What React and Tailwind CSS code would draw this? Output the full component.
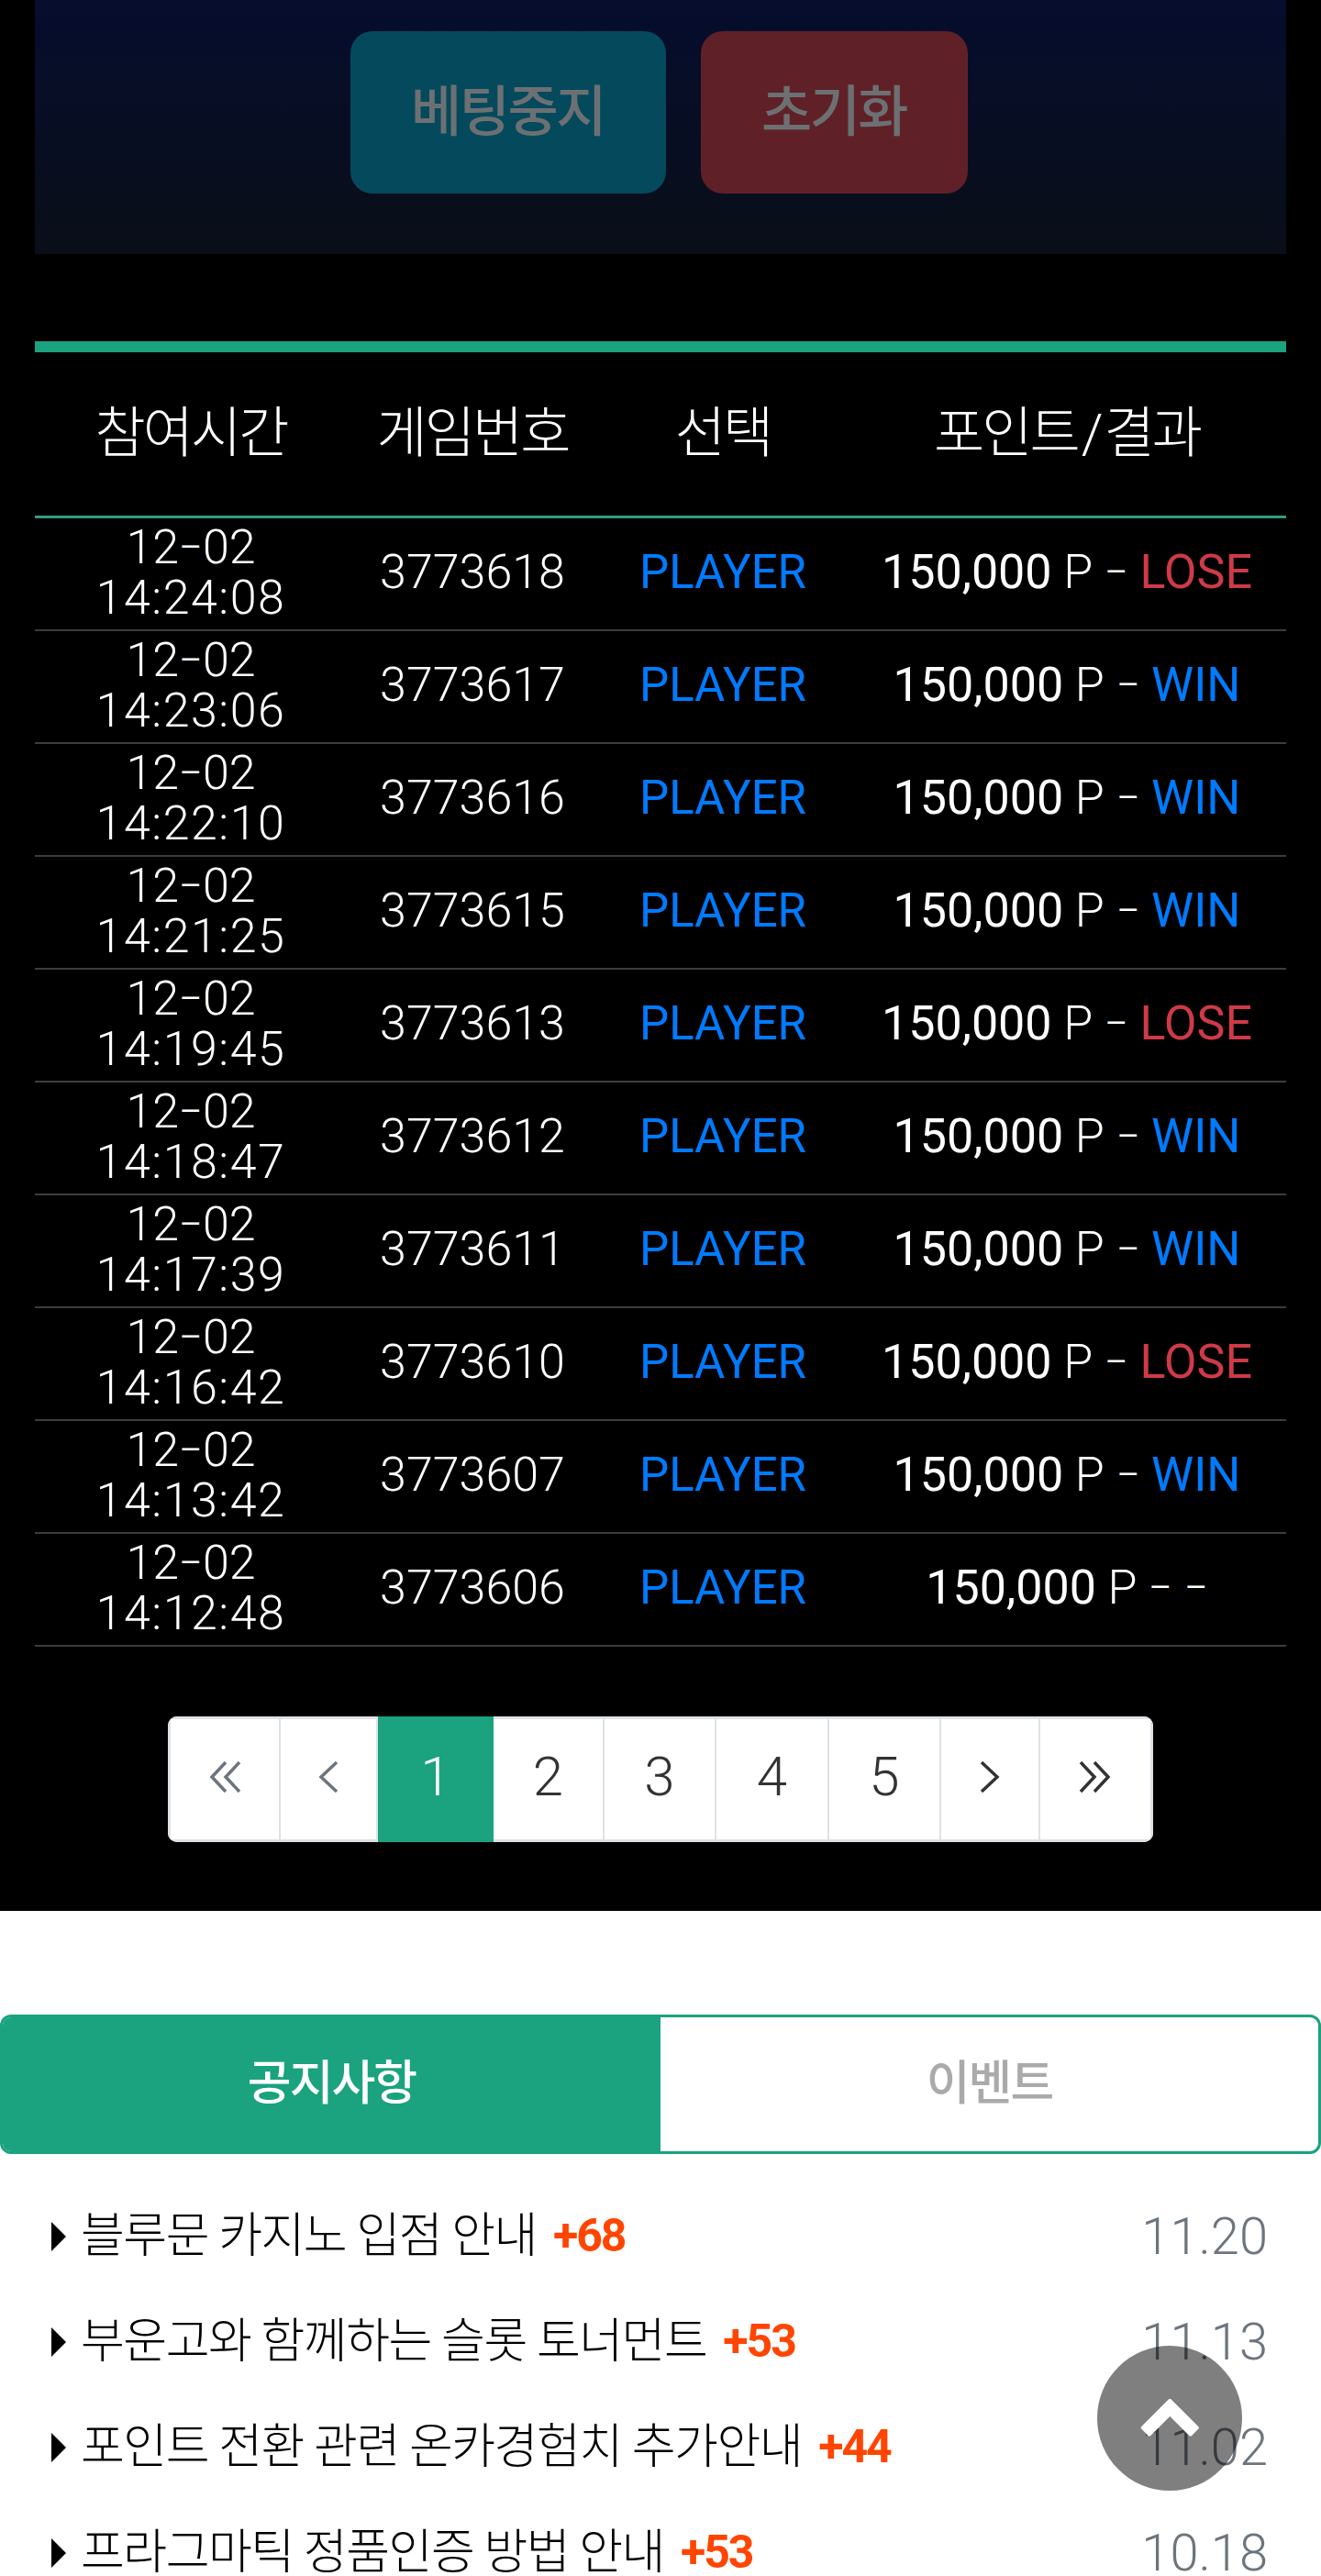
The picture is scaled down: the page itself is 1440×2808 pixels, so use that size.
const rows = [
  { date: '02', time: '14:24:08', no: '3773618', result: 'LOSE' },
  { date: '02', time: '14:23:06', no: '3773617', result: 'WIN' },
  { date: '02', time: '14:22:10', no: '3773616', result: 'WIN' },
  { date: '02', time: '14:21:25', no: '3773615', result: 'WIN' },
  { date: '02', time: '14:19:45', no: '3773613', result: 'LOSE' },
  { date: '02', time: '14:18:47', no: '3773612', result: 'WIN' },
  { date: '02', time: '14:17:39', no: '3773611', result: 'WIN' },
  { date: '02', time: '14:16:42', no: '3773610', result: 'LOSE' },
  { date: '02', time: '14:13:42', no: '3773607', result: 'WIN' },
  { date: '02', time: '14:12:48', no: '3773606', result: null },
];

const notices = [
  { title: '블루문 카지노 입점 안내', count: 68, date: '11.20' },
  { title: '부운고와 함께하는 슬롯 토너먼트', count: 53, date: '11.13' },
  { title: '포인트 전환 관련 온카경험치 추가안내', count: 44, date: '11.02' },
  { title: '프라그마틱 정품인증 방법 안내', count: 53, date: '10.18' },
];

const cols = 'grid grid-cols-[340px_274px_272px_478px]';

const Dash = () => <span className="-mx-[4px] inline-block scale-x-[0.73]">–</span>;

const ResultLabel = ({ result }) => {
  if (result === 'WIN') return <span className="font-normal text-[#007bff]">WIN</span>;
  if (result === 'LOSE') return <span className="font-normal text-[#cf3a48]">LOSE</span>;
  return <Dash />;
};

const Chevrons = ({ left, double }) => (
  <svg
    viewBox="0 0 36 36"
    className={`h-[36px] w-[36px] ${left ? '-scale-x-100' : ''}`}
    fill="none"
    stroke="currentColor"
    strokeWidth="3.5"
  >
    {double ? <path d="M2 2 L17 18 L2 34 M17 2 L32 18 L17 34" /> : <path d="M9 2 L26 18 L9 34" />}
  </svg>
);

const PageCell = ({ width, children, active, muted, first, last }) => (
  <div
    className={`flex items-center justify-center pb-[6px] ${width} ${
      active
        ? 'bg-[#1ba27f] text-white'
        : `border-y-[3px] border-[#dee2e6] ${last ? 'border-r-[3px]' : 'border-r-[2px]'} ${first ? 'border-l-[3px]' : ''} ${muted ? 'text-[#6c757d]' : 'text-[#333333]'}`
    }`}
  >
    {children}
  </div>
);

export default function App() {
  return (
    <div className="relative h-[2808px] overflow-hidden bg-white font-['Roboto','Noto_Sans_CJK_KR',sans-serif]">
      <div className="bg-black px-[38px] h-[2083px]">
        <div className="flex h-[277px] justify-center gap-[38px] bg-gradient-to-b from-[#060d2e] to-[#0a0e18] pt-[34px] pr-[4px]">
          <button className="h-[177px] w-[344px] rounded-[24px] bg-[#044a5c] text-[60px] font-medium tracking-[-2.5px] text-[#6d7073]">
            베팅중지
          </button>
          <button className="h-[177px] w-[291px] rounded-[24px] bg-[#5f2127] text-[60px] font-medium tracking-[-2.5px] text-[#6d7073]">
            초기화
          </button>
        </div>

        <div className="mt-[95px] border-t-[12px] border-[#1ba27f] text-white">
          <div className={`${cols} h-[181px] items-center border-b-[3px] border-[#349c80] text-center text-[60px] font-light tracking-[-3px]`}>
            <div>참여시간</div>
            <div>게임번호</div>
            <div>선택</div>
            <div>포인트<span className="mx-[4px]">/</span>결과</div>
          </div>
          {rows.map((row) => (
            <div
              key={row.no}
              className={`${cols} h-[123px] items-center border-b-[2px] border-[#3d3d3d] pb-[3px] text-center text-[52px] font-light`}
            >
              <div className="leading-[55px]">
                <div>12<Dash />{row.date}</div>
                <div className="tracking-[1.5px]">{row.time}</div>
              </div>
              <div>{row.no}</div>
              <div className="text-[51px] font-normal text-[#007bff]">PLAYER</div>
              <div>
                <span className="font-normal">150,000</span> P <Dash /> <ResultLabel result={row.result} />
              </div>
            </div>
          ))}
        </div>

        <div className="mt-[76px] flex justify-center">
          <div className="flex h-[137px] w-[1074px] overflow-hidden rounded-[10px] bg-white text-[60px] font-light">
            <PageCell width="w-[123px]" muted first><Chevrons left double /></PageCell>
            <PageCell width="w-[106px]" muted><Chevrons left /></PageCell>
            <PageCell width="w-[126px]" active>1</PageCell>
            <PageCell width="w-[121px]">2</PageCell>
            <PageCell width="w-[122px]">3</PageCell>
            <PageCell width="w-[123px]">4</PageCell>
            <PageCell width="w-[122px]">5</PageCell>
            <PageCell width="w-[108px]"><Chevrons /></PageCell>
            <PageCell width="w-[123px]" last><Chevrons double /></PageCell>
          </div>
        </div>
      </div>

      <div className="mt-[113px] flex h-[152px] overflow-hidden rounded-[12px] border-[3px] border-[#1ba27f] text-[52px] font-medium tracking-[-2px]">
        <div className="flex w-[717px] items-center justify-center bg-[#1ba27f] text-white">공지사항</div>
        <div className="flex flex-1 items-center justify-center text-[#aaaaaa]">이벤트</div>
      </div>

      <div className="mt-[32px] pl-[56px] pr-[58px]">
        {notices.map((item) => (
          <div key={item.date} className="flex h-[115px] items-center justify-between">
            <div className="flex items-center">
              <span className="mr-[16px] h-0 w-0 border-y-[16px] border-l-[16px] border-y-transparent border-l-black" />
              <span className="text-[52px] font-light tracking-[-1.5px] text-black">{item.title}</span>
              <span className="ml-[18px] text-[50px] font-bold tracking-[-2px] text-[#ff4500]">+{item.count}</span>
            </div>
            <span className="text-[56px] font-light text-[#6c757d]">{item.date}</span>
          </div>
        ))}
      </div>

      <div className="absolute left-[1196px] top-[2557px] flex h-[158px] w-[158px] items-center justify-center rounded-full bg-black/50">
        <svg viewBox="0 0 65 42" className="mb-[3px] h-[42px] w-[65px]" fill="white" stroke="white" strokeWidth="4" strokeLinejoin="round">
          <path d="M32.3 2.8 L61.8 32.4 L54.7 39.5 L32.3 17.2 L9.9 39.5 L2.8 32.4 Z" />
        </svg>
      </div>
    </div>
  );
}
